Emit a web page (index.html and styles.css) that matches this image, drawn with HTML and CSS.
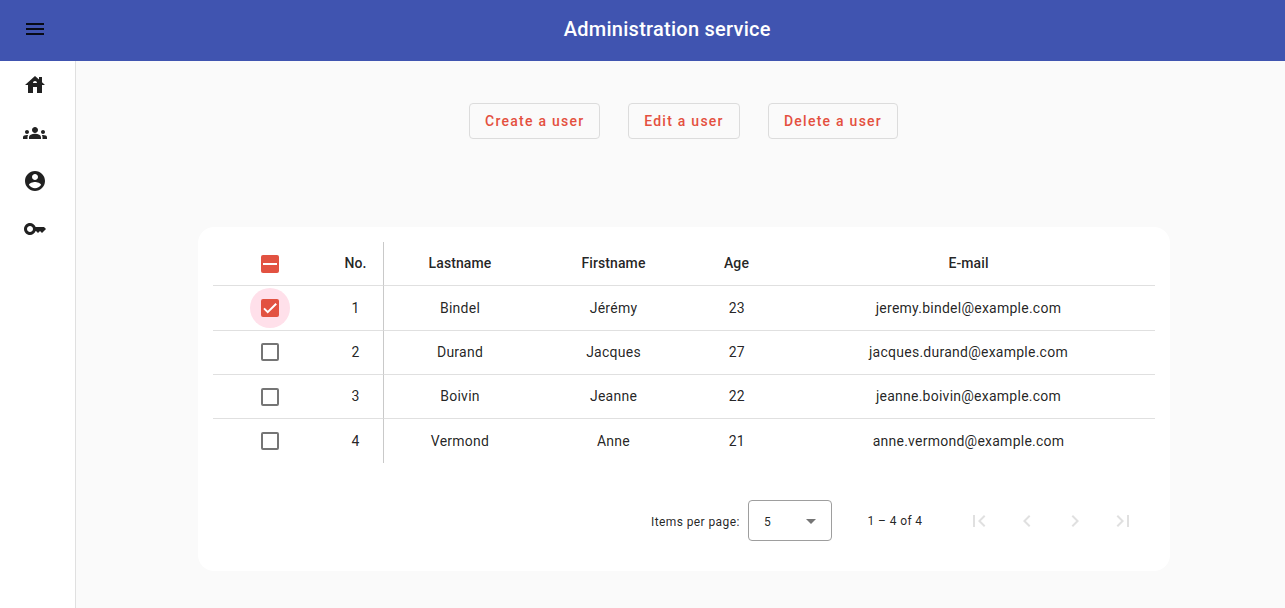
FILE: index.html
```html
<!DOCTYPE html>
<html lang="en">
<head>
<meta charset="utf-8">
<title>Administration service</title>
<link rel="stylesheet" href="styles.css">
</head>
<body>
<header class="toolbar">
  <button class="menu-button" aria-label="Menu"><svg class="icon" viewBox="0 0 24 24"><path d="M3 18h18v-2H3v2zm0-5h18v-2H3v2zm0-7v2h18V6H3z"/></svg></button>
  <h1 class="title">Administration service</h1>
</header>
<div class="layout">
  <nav class="sidebar">
    <a class="nav-item"><svg class="icon" viewBox="0 0 24 24"><path d="M19 9.3V4h-3v2.6L12 3 2 12h3v8h5v-6h4v6h5v-8h3l-3-2.7zm-9 .7c0-1.1.9-2 2-2s2 .9 2 2h-4z"/></svg></a>
    <a class="nav-item"><svg class="icon" viewBox="0 0 24 24"><path d="M12 12.75c1.63 0 3.07.39 4.24.9 1.08.48 1.76 1.56 1.76 2.73V18H6v-1.61c0-1.18.68-2.26 1.76-2.73 1.17-.52 2.61-.91 4.24-.91zM4 13c1.1 0 2-.9 2-2s-.9-2-2-2-2 .9-2 2 .9 2 2 2zm1.13 1.1c-.37-.06-.74-.1-1.13-.1-.99 0-1.93.21-2.78.58C.48 14.9 0 15.62 0 16.43V18h4.5v-1.61c0-.83.23-1.61.63-2.29zM20 13c1.1 0 2-.9 2-2s-.9-2-2-2-2 .9-2 2 .9 2 2 2zm4 3.43c0-.81-.48-1.53-1.22-1.85-.85-.37-1.79-.58-2.78-.58-.39 0-.76.04-1.13.1.4.68.63 1.46.63 2.29V18H24v-1.57zM12 6c1.66 0 3 1.34 3 3s-1.34 3-3 3-3-1.34-3-3 1.34-3 3-3z"/></svg></a>
    <a class="nav-item"><svg class="icon" viewBox="0 0 24 24"><path d="M12 2C6.48 2 2 6.48 2 12s4.48 10 10 10 10-4.48 10-10S17.52 2 12 2zm0 3c1.66 0 3 1.34 3 3s-1.34 3-3 3-3-1.34-3-3 1.34-3 3-3zm0 14.2c-2.5 0-4.71-1.28-6-3.22.03-1.99 4-3.08 6-3.08 1.99 0 5.97 1.09 6 3.08-1.29 1.94-3.5 3.22-6 3.22z"/></svg></a>
    <a class="nav-item"><svg class="icon" viewBox="0 0 24 24"><path fill-rule="evenodd" d="M21 10h-8.35C11.83 7.67 9.61 6 7 6c-3.31 0-6 2.69-6 6s2.69 6 6 6c2.61 0 4.83-1.67 5.65-4H13l2 2 2-2 2 2 4-4.04L21 10zM7 15c-1.65 0-3-1.35-3-3s1.35-3 3-3 3 1.35 3 3-1.35 3-3 3z"/></svg></a>
  </nav>
  <main class="content">
    <div class="actions">
      <button class="action create">Create a user</button>
      <button class="action edit">Edit a user</button>
      <button class="action delete">Delete a user</button>
    </div>
    <section class="card">
      <table class="users">
        <colgroup><col class="col-select"><col class="col-number"><col class="col-lastname"><col class="col-firstname"><col class="col-age"><col class="col-email"></colgroup>
        <thead>
          <tr class="raised"><th><span class="checkbox filled"><svg viewBox="0 0 18 18"><path d="M2 9h14"/></svg></span></th><th class="number">No.</th><th>Lastname</th><th>Firstname</th><th>Age</th><th>E-mail</th></tr>
        </thead>
        <tbody>
          <tr class="selected"><td><span class="ripple"><span class="checkbox filled"><svg viewBox="0 0 18 18"><path d="M3 9.4l3.7 3.7L15.2 4.7"/></svg></span></span></td><td class="number">1</td><td>Bindel</td><td>Jérémy</td><td class="age">23</td><td>jeremy.bindel@example.com</td></tr>
          <tr class="raised"><td class="select-cell"><span class="checkbox"></span></td><td class="number">2</td><td>Durand</td><td>Jacques</td><td class="age">27</td><td>jacques.durand@example.com</td></tr>
          <tr class="raised"><td><span class="checkbox"></span></td><td class="number">3</td><td>Boivin</td><td>Jeanne</td><td class="age">22</td><td>jeanne.boivin@example.com</td></tr>
          <tr><td><span class="checkbox"></span></td><td class="number">4</td><td>Vermond</td><td>Anne</td><td class="age">21</td><td>anne.vermond@example.com</td></tr>
        </tbody>
      </table>
      <div class="paginator">
        <span class="page-label">Items per page:</span>
        <div class="select"><span>5</span><svg class="arrow" viewBox="0 0 10 5"><path d="M0 0l5 5 5-5z"/></svg></div>
        <span class="range">1 – 4 of 4</span>
        <div class="pager">
          <button class="page-button"><svg viewBox="0 0 24 24"><path d="M18.41 16.59L13.82 12l4.59-4.59L17 6l-6 6 6 6zM6 6h2v12H6z"/></svg></button>
          <button class="page-button"><svg viewBox="0 0 24 24"><path d="M15.41 7.41L14 6l-6 6 6 6 1.41-1.41L10.83 12z"/></svg></button>
          <button class="page-button"><svg viewBox="0 0 24 24"><path d="M10 6L8.59 7.41 13.17 12l-4.58 4.59L10 18l6-6z"/></svg></button>
          <button class="page-button"><svg viewBox="0 0 24 24"><path d="M5.59 7.41L10.18 12l-4.59 4.59L7 18l6-6-6-6zM16 6h2v12h-2z"/></svg></button>
        </div>
      </div>
    </section>
  </main>
</div>
</body>
</html>
```

FILE: styles.css
```css
* { box-sizing: border-box; }
body { margin: 0; height: 608px; display: flex; flex-direction: column; overflow: hidden; background: #fafafa; color: rgba(0, 0, 0, 0.87); font-family: Roboto, sans-serif; font-size: 14px; }
button { margin: 0; padding: 0; border: 0; background: none; font: inherit; color: inherit; }
.icon { display: block; width: 24px; height: 24px; fill: currentColor; }
.toolbar { flex: none; height: 61px; display: flex; align-items: center; padding: 0 0 3px 11px; background: #4054b0; }
.menu-button { width: 48px; height: 48px; padding: 12px; }
.title { flex: 1; margin: 0; padding-right: 9.5px; text-align: center; color: #fff; font-size: 20px; line-height: 32px; font-weight: 500; letter-spacing: 0.25px; }
.layout { flex: 1; display: flex; min-height: 0; }
.sidebar { flex: none; width: 76px; background: #fff; border-right: 1px solid #e0e0e0; }
.nav-item { display: flex; align-items: center; height: 48px; padding-left: 23px; }
.content { flex: 1; display: flex; flex-direction: column; padding: 42px 115px 0 122px; }
.actions { display: flex; justify-content: center; gap: 28px; padding-right: 2px; }
.action { height: 36px; padding-left: 1px; border: 1px solid #dcdcdc; border-radius: 4px; color: #e4503f; font-weight: 500; letter-spacing: 1.25px; text-align: center; }
.create { width: 131px; padding-left: 1.5px; }
.edit { width: 112px; }
.delete { width: 130px; }
.card { height: 344px; margin-top: 88px; padding: 15px; background: #fff; border-radius: 16px; }
.users { width: 942px; table-layout: fixed; border-collapse: separate; border-spacing: 0; text-align: center; }
.col-select { width: 114px; }
.col-number { width: 57px; }
.col-lastname { width: 152px; }
.col-firstname { width: 155px; }
.col-age { width: 91px; }
.col-email { width: 373px; }
.users th, .users td { height: 44px; padding: 0; line-height: 20px; letter-spacing: 0.25px; border-bottom: 1px solid #e0e0e0; }
.users th { font-weight: 500; letter-spacing: 0.1px; }
.users .selected td { height: 45px; }
.users tbody tr:last-child td { border-bottom: 0; }
.users .raised > :not(:first-child), .users .select-cell { padding-bottom: 1px; }
.users .number { padding-left: 1px; border-right: 1px solid #c9c9c9; }
.users .age { padding-left: 0.5px; }
.checkbox { display: block; width: 18px; height: 18px; margin: 0 auto; border: 2px solid #757575; border-radius: 2px; }
.filled { border: 0; background: #e25241; }
.checkbox svg { display: block; width: 18px; height: 18px; fill: none; stroke: #fff; stroke-width: 2; }
.ripple { display: flex; align-items: center; width: 40px; height: 40px; margin: 0 auto; border-radius: 50%; background: #ffe0ea; }
.paginator { display: flex; align-items: center; justify-content: flex-end; height: 56px; margin-top: 30px; padding-right: 8px; font-size: 12px; line-height: 20px; letter-spacing: 0.4px; }
.page-label { margin-right: 8.25px; padding-top: 2px; }
.select { display: flex; align-items: center; justify-content: space-between; width: 84px; height: 41px; margin: 0 35.5px 2px 0; padding: 3px 15px 0; border: 1px solid #9e9e9e; border-radius: 4px; }
.arrow { width: 10px; height: 5px; fill: #757575; }
.range { margin-right: 32.5px; }
.pager { display: flex; }
.page-button { width: 48px; height: 48px; padding: 12px; }
.page-button svg { display: block; width: 24px; height: 24px; fill: #e0e0e0; }
```
